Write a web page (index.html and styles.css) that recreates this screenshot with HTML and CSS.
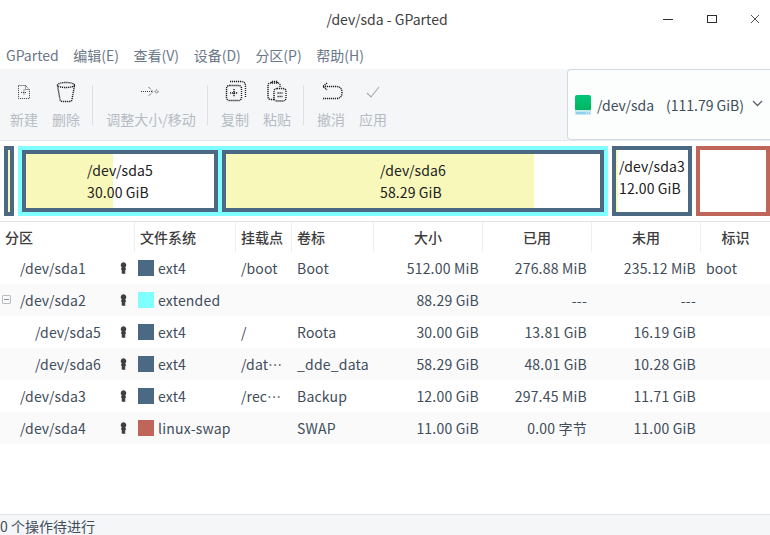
FILE: index.html
```html
<!DOCTYPE html>
<html lang="zh">
<head>
<meta charset="utf-8">
<title>/dev/sda - GParted</title>
<link rel="stylesheet" href="styles.css">
</head>
<body>
<div class="app">
  <header class="titlebar">
    <span class="title">/dev/sda - GParted</span>
    <div class="winctl">
      <svg width="12" height="12" viewBox="0 0 12 12"><path d="M1 6.5h10" class="wc"/></svg>
      <svg width="12" height="12" viewBox="0 0 12 12"><rect x="1.5" y="2.5" width="9" height="7" class="wc"/></svg>
      <svg width="12" height="12" viewBox="0 0 12 12"><path d="M2 2l8 8M10 2l-8 8" class="wc thin"/></svg>
    </div>
  </header>
  <nav class="menubar">
    <span>GParted</span><span>编辑(E)</span><span>查看(V)</span><span>设备(D)</span><span>分区(P)</span><span>帮助(H)</span>
  </nav>
  <section class="toolbar">
    <div class="tools">
      <div class="tool">
        <svg width="28" height="28" viewBox="0 0 28 28"><path class="dot" d="M8.500 7.500h7l4 4v9h-11zM15.500 7.500v4h4M14 11.500v6M11 14.500h6"/></svg>
        <span>新建</span>
      </div>
      <div class="tool">
        <svg width="28" height="28" viewBox="0 0 28 28"><g class="dot strong"><ellipse cx="14" cy="7" rx="8.500" ry="2.500"/><path d="M5.500 7.500l2.500 14q.3 2 2.500 2h7q2.200 0 2.500-2l2.500-14"/></g></svg>
        <span>删除</span>
      </div>
      <i class="sep first"></i>
      <div class="tool wide">
        <svg width="28" height="28" viewBox="0 0 28 28"><path class="dot" d="M4 13.500h12M11.500 9l4.500 4.500-4.500 4.500"/><circle class="dot" cx="19.500" cy="13.500" r="1.500"/></svg>
        <span>调整大小/移动</span>
      </div>
      <i class="sep"></i>
      <div class="tool">
        <svg width="28" height="28" viewBox="0 0 28 28"><g class="dot strong"><rect x="5.500" y="7.500" width="15" height="15" rx="3"/><path d="M13 11v8M9 15h8M9 3.500h11q4.500 0 4.500 4.500v11"/></g></svg>
        <span>复制</span>
      </div>
      <div class="tool">
        <svg width="28" height="28" viewBox="0 0 28 28"><g class="dot strong"><path d="M11 21.500H8q-3 0-3-3V8q0-3 3-3h6q3 0 3 2v2"/><path d="M8.500 5V3.500h6V5"/><rect x="11" y="10.500" width="12" height="12.500" rx="3"/><path d="M14.500 15h5M14.500 18.500h5"/></g></svg>
        <span>粘贴</span>
      </div>
      <i class="sep"></i>
      <div class="tool">
        <svg width="28" height="28" viewBox="0 0 28 28"><path class="dot strong" d="M10 5L6 8.500l4 3.500M6 8.500h13q6 0 6 6t-6 6H6"/></svg>
        <span>撤消</span>
      </div>
      <div class="tool">
        <svg width="28" height="28" viewBox="0 0 28 28"><path class="check" d="M8 15l4 4 8-10"/></svg>
        <span>应用</span>
      </div>
    </div>
    <div class="device">
      <svg class="disk" width="16" height="20" viewBox="0 0 16 20">
        <defs><linearGradient id="diskfill" x1="0" y1="0" x2="0" y2="1"><stop offset="0" stop-color="#00c878"/><stop offset="1" stop-color="#00b35f"/></linearGradient></defs>
        <rect width="16" height="16" rx="2" fill="url(#diskfill)"/>
        <rect y="15" width="16" height="5" rx="1" fill="#c4e8f0"/>
        <path d="M1 18h10" stroke="#5fb9ea" stroke-width="1"/>
        <path d="M12 18h3" stroke="#5fb9ea" stroke-width="1" stroke-dasharray="1 1"/>
      </svg>
      <span class="devname">/dev/sda</span>
      <span class="devsize">(111.79 GiB)</span>
      <svg class="chev" width="11" height="7" viewBox="0 0 11 7"><path d="M1 1l4.500 4.500L10 1" fill="none" stroke="#59616b" stroke-width="1.300"/></svg>
    </div>
  </section>
  <section class="map">
    <div class="part ext4 sda1"><div class="used"></div></div>
    <div class="extended">
      <div class="part ext4 sda5"><div class="used" style="width:46.300%"></div><div class="plabel">/dev/sda5<br>30.00 GiB</div></div>
      <div class="part ext4 sda6"><div class="used" style="width:82.400%"></div><div class="plabel">/dev/sda6<br>58.29 GiB</div></div>
    </div>
    <div class="part ext4 sda3"><div class="used" style="width:3%"></div><div class="plabel">/dev/sda3<br>12.00 GiB</div></div>
    <div class="part swap sda4"></div>
  </section>
  <section class="table">
    <div class="row head">
      <span class="hleft">分区</span><span class="hleft">文件系统</span><span class="hleft">挂载点</span><span class="hleft">卷标</span>
      <span>大小</span><span>已用</span><span>未用</span><span>标识</span>
    </div>
    <div class="row">
      <div class="c-part"><span class="name">/dev/sda1</span><svg class="key" viewBox="0 0 8 13"><use href="#keyhole"/></svg></div>
      <div class="c-fs"><i class="sw blue"></i>ext4</div><div class="c-txt">/boot</div><div class="c-lab">Boot</div>
      <div class="num">512.00 MiB</div><div class="num">276.88 MiB</div><div class="num">235.12 MiB</div><div class="c-flag">boot</div>
    </div>
    <div class="row alt">
      <div class="c-part"><i class="expander"></i><span class="name">/dev/sda2</span><svg class="key" viewBox="0 0 8 13"><use href="#keyhole"/></svg></div>
      <div class="c-fs"><i class="sw cyan"></i>extended</div><div class="c-txt"></div><div class="c-lab"></div>
      <div class="num">88.29 GiB</div><div class="num">---</div><div class="num">---</div><div class="c-flag"></div>
    </div>
    <div class="row">
      <div class="c-part"><span class="name sub">/dev/sda5</span><svg class="key" viewBox="0 0 8 13"><use href="#keyhole"/></svg></div>
      <div class="c-fs"><i class="sw blue"></i>ext4</div><div class="c-txt">/</div><div class="c-lab">Roota</div>
      <div class="num">30.00 GiB</div><div class="num">13.81 GiB</div><div class="num">16.19 GiB</div><div class="c-flag"></div>
    </div>
    <div class="row alt">
      <div class="c-part"><span class="name sub">/dev/sda6</span><svg class="key" viewBox="0 0 8 13"><use href="#keyhole"/></svg></div>
      <div class="c-fs"><i class="sw blue"></i>ext4</div><div class="c-txt">/dat⋯</div><div class="c-lab">_dde_data</div>
      <div class="num">58.29 GiB</div><div class="num">48.01 GiB</div><div class="num">10.28 GiB</div><div class="c-flag"></div>
    </div>
    <div class="row">
      <div class="c-part"><span class="name">/dev/sda3</span><svg class="key" viewBox="0 0 8 13"><use href="#keyhole"/></svg></div>
      <div class="c-fs"><i class="sw blue"></i>ext4</div><div class="c-txt">/rec⋯</div><div class="c-lab">Backup</div>
      <div class="num">12.00 GiB</div><div class="num">297.45 MiB</div><div class="num">11.71 GiB</div><div class="c-flag"></div>
    </div>
    <div class="row alt">
      <div class="c-part"><span class="name">/dev/sda4</span><svg class="key" viewBox="0 0 8 13"><use href="#keyhole"/></svg></div>
      <div class="c-fs"><i class="sw red"></i>linux-swap</div><div class="c-txt"></div><div class="c-lab">SWAP</div>
      <div class="num">11.00 GiB</div><div class="num">0.00 字节</div><div class="num">11.00 GiB</div><div class="c-flag"></div>
    </div>
  </section>
  <footer class="status">0 个操作待进行</footer>
</div>
<svg class="defs" width="0" height="0"><defs>
  <path id="keyhole" fill="#3f3f3f" d="M4 0a3.200 3.200 0 0 1 2 5.700L7 8 6 8.800V13H2V8.800L1 8l1-2.300A3.200 3.200 0 0 1 4 0z"/>
</defs></svg>
</body>
</html>
```
FILE: styles.css
```css
* { box-sizing: border-box; }
html, body { margin: 0; padding: 0; }
body {
  width: 770px;
  height: 535px;
  overflow: hidden;
  background: #fff;
  color: #414d5a;
  font: 14px/20px "Noto Sans CJK SC", "Noto Sans", sans-serif;
}
.app { display: flex; flex-direction: column; height: 535px; }
.defs { position: absolute; }

.titlebar { height: 41px; flex: none; display: flex; align-items: center; justify-content: center; position: relative; padding: 0 0 3px 4px; }
.title { color: #414141; letter-spacing: .02px; }
.winctl { position: absolute; right: 9px; top: 13px; display: flex; gap: 31.500px; }
.winctl svg { display: block; }
.wc { fill: none; stroke: #2e2e2e; stroke-width: 1; }
.wc.thin { stroke: #555; }

.menubar { height: 28px; flex: none; display: flex; gap: 14.600px; padding: 4px 0 0 6px; color: #6a7788; }

.toolbar { height: 71px; flex: none; display: flex; justify-content: space-between; background: #f4f6f8; }
.tools { display: flex; padding: 9px 0 0 10px; gap: 14px; }
.tool { display: flex; flex-direction: column; align-items: center; color: #b7bcc4; }
.tool.wide { width: 88px; }
.tool svg { display: block; margin-bottom: 3px; }
.tool span { line-height: 20px; white-space: nowrap; }
.sep { width: 1px; height: 40px; margin: 7px -1px 0 -2px; background: #dcdfe3; }
.sep.first { margin-right: 0; }
.dot { fill: none; stroke: #3a3a3a; stroke-width: 1; stroke-dasharray: 1 1; }
.dot.strong { stroke: #1c1c1c; stroke-width: 1.400; stroke-dasharray: 1.200 .8; }
.check { fill: none; stroke: #a6aaae; stroke-width: 1.100; }

.device {
  width: 203px;
  background: #fcfdfd;
  border: 1px solid #d3d9e3;
  border-right: 0;
  border-radius: 4px 0 0 4px;
  display: flex;
  align-items: center;
  padding: 0 7px 0 7px;
  color: #414d5a;
}
.disk { flex: none; margin-right: 6px; }
.devname { margin-right: 10px; width: 59px; }
.devsize { margin-right: 8px; white-space: nowrap; }
.chev { flex: none; margin-top: -3px; }

.map {
  height: 82px;
  flex: none;
  display: flex;
  gap: 4px;
  padding: 5px 0 5px 4px;
  border-top: 1px solid #e6e9f2;
  border-bottom: 1px solid #e3e3e3;
  background: #fff;
}
.part { position: relative; border: 4px solid #4b6983; background: #fff; color: #222; flex: none; }
.swap { border-color: #c0655a; }
.used { position: absolute; left: 0; top: 0; bottom: 0; width: 100%; background: #f8f8ba; }
.plabel { position: relative; text-align: left; line-height: 22px; white-space: nowrap; width: max-content; margin: 5px auto 0; color: #202020; letter-spacing: .1px; }
.sda1 { width: 10px; }
.extended { width: 590px; flex: none; display: flex; gap: 4px; padding: 4px; background: #7fffff; }
.sda5 { width: 196px; }
.sda6 { width: 382px; }
.sda3 { width: 80px; }
.sda4 { width: 74px; }

.table { flex: 1; display: flex; flex-direction: column; }
.row {
  display: grid;
  grid-template-columns: 134px 101px 56px 82px 109px 109px 109px 70px;
  height: 32px;
  align-items: center;
  flex: none;
  color: #414d5a;
}
.row.alt { background: #fafafa; }
.head { height: 30px; font-weight: 500; color: #3c3c3c; }
.head span { height: 30px; line-height: 30px; text-align: center; border-left: 1px solid #eeeeee; }
.head span:first-child { border-left: 0; }
.head .hleft { text-align: left; padding-left: 5px; }
.c-part { position: relative; padding-left: 20px; height: 32px; line-height: 32px; }
.name { display: block; letter-spacing: .1px; }
.name.sub { padding-left: 15px; }
.key { position: absolute; left: 120px; top: 10px; width: 7px; height: 12px; }
.expander { position: absolute; left: 2px; top: 11px; width: 9px; height: 9px; border: 1px solid #b8bdc6; border-radius: 1px; background: linear-gradient(#8d939c, #8d939c) center / 5px 1px no-repeat; }
.c-fs { display: flex; align-items: center; padding-left: 4px; white-space: nowrap; letter-spacing: .2px; }
.sw { width: 16px; height: 16px; flex: none; margin-right: 4px; }
.blue { background: #4b6983; }
.cyan { background: #7fffff; }
.red { background: #c0655a; }
.c-txt { padding-left: 6px; white-space: nowrap; letter-spacing: .1px; }
.c-lab { padding-left: 6px; white-space: nowrap; letter-spacing: .2px; }
.num { text-align: right; padding-right: 3px; white-space: nowrap; letter-spacing: .2px; }
.num:nth-child(n+6) { padding-right: 4px; }
.c-flag { padding-left: 6px; letter-spacing: .1px; }

.status { margin-top: auto; height: 21px; flex: none; background: #f4f6f8; border-top: 1px solid #e3e3e3; line-height: 23px; color: #414d5a; white-space: nowrap; }
```
